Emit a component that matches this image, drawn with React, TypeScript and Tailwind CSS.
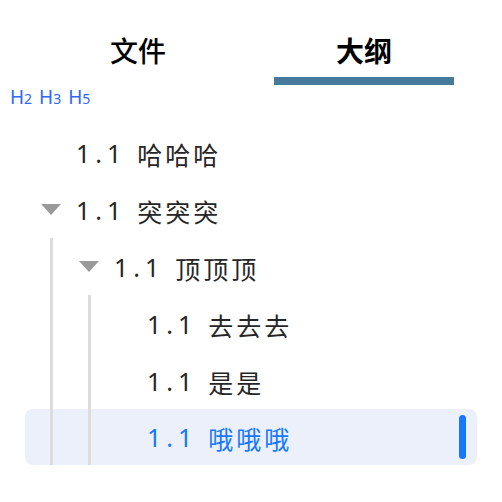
import React from "react";

const Tri = () => (
  <svg width="20" height="11" viewBox="0 0 20 11" className="shrink-0">
    <polygon points="0,0 20,0 10,11" fill="#9a9a9a" />
  </svg>
);

const Guide = () => <div className="w-[3px] self-stretch bg-[#dcdcdc] shrink-0" />;

const Label = ({ text, active }: { text: string; active?: boolean }) => (
  <span className={`flex items-center whitespace-pre ${active ? "text-[#1677ff]" : "text-[#262626]"}`}>
    <span className="text-[25px] tracking-[5px] leading-[32px]">1.1</span>
    <span className="w-[11px]" />
    <span className="text-[25px] tracking-[3px] leading-[32px] mt-[2px]" style={{ fontFamily: '"Noto Sans CJK SC", sans-serif' }}>
      {text}
    </span>
  </span>
);

export default function App() {
  const font = { fontFamily: '"Noto Sans", "Noto Sans CJK SC", sans-serif' };
  return (
    <div className="w-[502px] h-[502px] bg-white overflow-hidden" style={font}>
      <div className="flex px-[25px] pt-[32px]" style={{ fontFamily: '"Noto Sans CJK SC", sans-serif' }}>
        <div className="flex-1 flex flex-col items-center">
          <div className="text-[28px] leading-[36px] font-medium text-black">文件</div>
          <div className="mt-[9px] h-[8px] w-[180px]" />
        </div>
        <div className="flex-1 flex flex-col items-center">
          <div className="text-[28px] leading-[36px] font-bold text-black">大纲</div>
          <div className="mt-[9px] h-[8px] w-[180px] bg-[#467a9c]" />
        </div>
      </div>

      <div className="flex gap-[7px] pl-[10px] mt-[2px] h-[20px] items-baseline text-[#2f66ff] leading-[20px]">
        <span><span className="text-[19px]">H</span><span className="text-[14px]">2</span></span>
        <span><span className="text-[19px]">H</span><span className="text-[14px]">3</span></span>
        <span><span className="text-[19px]">H</span><span className="text-[14px]">5</span></span>
      </div>

      <div className="mt-[17px] px-[25px] flex flex-col">
        <div className="flex items-center h-[57px] rounded-lg">
          <div className="w-[51px] shrink-0" />
          <Label text="哈哈哈" />
        </div>
        <div className="flex items-center h-[57px] rounded-lg">
          <div className="w-[16px] shrink-0" />
          <Tri />
          <div className="w-[15px] shrink-0" />
          <Label text="突突突" />
        </div>
        <div className="flex items-center h-[57px] rounded-lg">
          <div className="w-[25px] shrink-0" />
          <Guide />
          <div className="w-[26px] shrink-0" />
          <Tri />
          <div className="w-[15px] shrink-0" />
          <Label text="顶顶顶" />
        </div>
        <div className="flex items-center h-[57px] rounded-lg">
          <div className="w-[25px] shrink-0" />
          <Guide />
          <div className="w-[35px] shrink-0" />
          <Guide />
          <div className="w-[56px] shrink-0" />
          <Label text="去去去" />
        </div>
        <div className="flex items-center h-[57px] rounded-lg">
          <div className="w-[25px] shrink-0" />
          <Guide />
          <div className="w-[35px] shrink-0" />
          <Guide />
          <div className="w-[56px] shrink-0" />
          <Label text="是是" />
        </div>
        <div className="flex items-center h-[56px] rounded-lg bg-[#ebf0fb]">
          <div className="w-[25px] shrink-0" />
          <Guide />
          <div className="w-[35px] shrink-0" />
          <Guide />
          <div className="w-[56px] shrink-0" />
          <Label text="哦哦哦" active />
          <div className="ml-auto mr-[11px] w-[7px] h-[44px] rounded-full bg-[#1677ff]" />
        </div>
      </div>
    </div>
  );
}
